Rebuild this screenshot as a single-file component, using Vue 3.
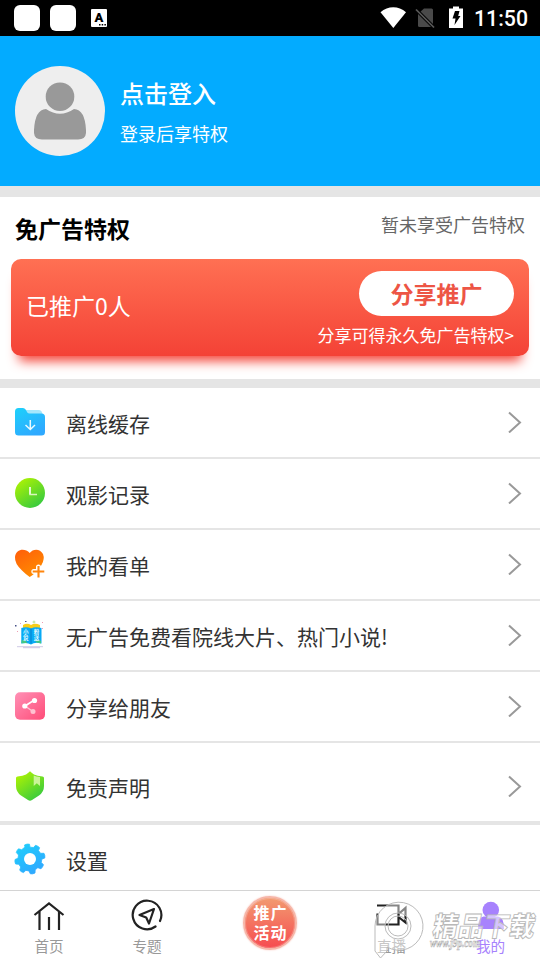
<script setup>
const rows = [
  { icon: 'folder', label: '离线缓存' },
  { icon: 'clock', label: '观影记录' },
  { icon: 'heart', label: '我的看单' },
  { icon: 'book', label: '无广告免费看院线大片、热门小说!' },
  { icon: 'share', label: '分享给朋友' },
  { icon: 'shield', label: '免责声明' },
  { icon: 'gear', label: '设置' },
]
</script>

<template>
  <div class="screen">
    <header class="status">
      <span class="app-square"></span>
      <span class="app-square"></span>
      <svg class="keyboard" viewBox="0 0 16 18" width="16" height="18">
        <rect width="16" height="18" rx="1" fill="#fff" />
        <text x="8" y="12.6" text-anchor="middle" class="key-letter">A</text>
        <path d="M8 15h1.500v1.600H8zM10.700 15h1.500v1.600h-1.500zM13.400 15h1.500v1.600h-1.500z" fill="#000" />
      </svg>
      <svg class="signals" viewBox="0 0 84 24" width="84" height="24">
        <path d="M.5 6.200C8-.4 18.500-.4 26 6.200L13.300 22z" fill="#fff" />
        <path d="M44 2.500h7.500q1.500 0 1.500 1.500v15.500q0 1.500-1.500 1.500h-12q-1.500 0-1.500-1.500V8z" fill="#4a4a4a" />
        <path d="M36.500 4L54.500 22" stroke="#000" stroke-width="3.500" />
        <path d="M36 3.500L54 21.500" stroke="#5a5a5a" stroke-width="1.700" />
        <path d="M73 .5h6v2h4v19.500H69V2.500h4z" fill="#fff" />
        <path d="M75 5h4.500l-1.300 5h2.300L74.500 19l1-6.500h-3z" fill="#000" />
      </svg>
      <span class="time">11:50</span>
    </header>

    <section class="profile">
      <svg class="avatar" viewBox="0 0 90 90" width="90" height="90">
        <circle cx="45" cy="45" r="45" fill="#eee" />
        <circle cx="45" cy="30.700" r="14.300" fill="#999" />
        <path d="M31 43Q20 43.500 19 64V67Q19.500 73.500 27 73.500H63Q70.500 73.500 71 67V64Q70 43.500 59 43Q45 52.500 31 43z" fill="#999" />
      </svg>
      <div>
        <div class="login">点击登入</div>
        <div class="login-note">登录后享特权</div>
      </div>
    </section>

    <section class="privilege">
      <div class="privilege-head">
        <h2>免广告特权</h2>
        <span>暂未享受广告特权</span>
      </div>
      <div class="promo">
        <span class="count">已推广0人</span>
        <div class="promo-side">
          <button>分享推广</button>
          <span class="promo-note">分享可得永久免广告特权&gt;</span>
        </div>
      </div>
    </section>

    <main>
      <div v-for="row in rows" :key="row.icon" class="row" :class="row.icon">
        <svg class="row-icon" viewBox="0 0 30 30" width="30" height="30">
          <defs>
            <linearGradient id="blue" x1="0" y1="0" x2=".6" y2="1"><stop stop-color="#1dd1fb" /><stop offset="1" stop-color="#2fa9ff" /></linearGradient>
            <linearGradient id="green" x1=".1" y1="0" x2=".8" y2="1"><stop stop-color="#b4f500" /><stop offset="1" stop-color="#31c842" /></linearGradient>
            <linearGradient id="orange" x1="0" y1="0" x2=".6" y2="1"><stop stop-color="#ff5d0b" /><stop offset="1" stop-color="#ff8b00" /></linearGradient>
            <linearGradient id="pink" x1="0" y1="0" x2="1" y2="1"><stop stop-color="#ff91b6" /><stop offset="1" stop-color="#ff4c78" /></linearGradient>
          </defs>
          <g v-if="row.icon === 'folder'">
            <path d="M10 3H24Q27.500 3.500 27.500 8H13z" fill="#a5e7fc" />
            <path d="M3.500 1H8Q9.700 1 10.600 2.500L12.500 5.700Q13 6.500 14.500 6.500H26.500Q30 6.500 30 10V25Q30 28.500 26.500 28.500H3.500Q0 28.500 0 25V4.500Q0 1 3.500 1z" fill="url(#blue)" />
            <path d="M15.300 13v9.300M10.500 18l4.800 4.500L20 18" fill="none" stroke="#e9faff" stroke-width="1.500" />
          </g>
          <g v-else-if="row.icon === 'clock'">
            <circle cx="15" cy="15" r="15" fill="url(#green)" />
            <path d="M15 9v7.500" stroke="#fff" stroke-width="1.600" />
            <path d="M14.300 16.500H22" stroke="#d9f7bd" stroke-width="1.500" />
          </g>
          <g v-else-if="row.icon === 'heart'">
            <path d="M14.700 4C10-1.200 1-.3 0 8Q-.5 14.500 7 21.500Q11 25.500 14.700 28Q22 23.500 26.500 16Q30 10 28 5C25-.7 18-.5 14.700 4z" fill="url(#orange)" />
            <path d="M23.500 18v9M18.800 22.500h9" stroke="#fff" stroke-width="5" stroke-linecap="round" />
            <path d="M23.500 17v11.500M17.700 22.500h11.600" stroke="#ff850d" stroke-width="2.100" />
          </g>
          <g v-else-if="row.icon === 'book'">
            <path d="M8 5Q12 2.500 16 5Q20 2.500 25 5V10H8z" fill="#f8cd18" />
            <path d="M6.300 8Q12 6.500 16 8.500Q20 6.500 26.500 8V23.500Q20 21.500 16 24.500Q12 22 6.300 23.500z" fill="#08aaf5" />
            <path d="M16 8.500v15" stroke="#067fc9" />
            <path d="M6.800 20q4-.5 5.500 3l-6 .3zM20 22q3-3 6-1v2.500z" fill="#44c783" />
            <text x="10.800" y="13.500" class="book-text">小</text><text x="21.500" y="13.500" class="book-text">粉</text>
            <text x="10.800" y="20" class="book-text">说</text><text x="21.500" y="20" class="book-text">送</text>
            <path d="M2 26.700h26" stroke="#c3bddd" stroke-width=".8" /><path d="M8 27.700h17" stroke="#b8afd9" stroke-width=".7" />
            <path d="M0 5h1.500v1.500H0z" fill="#465187" /><path d="M10 1h1.500v1H10z" fill="#465187" /><path d="M5 3h1v1H5zM27 2h1v1h-1zM2 11h1v1H2zM27 8h1v1h-1z" fill="#ee9db3" /><circle cx="19" cy="2" r="1" fill="none" stroke="#a8da69" stroke-width=".7" />
          </g>
          <g v-else-if="row.icon === 'share'">
            <rect y="1.200" width="30" height="27.500" rx="5" fill="url(#pink)" />
            <path d="M10 15L18 20.500" stroke="#ffc5d4" stroke-width="1.500" />
            <circle cx="18" cy="20.500" r="2.500" fill="#ffc1d0" />
            <path d="M10 15L19 9.300" stroke="#fff" stroke-width="1.600" />
            <circle cx="9.800" cy="15" r="2.600" fill="#fff" /><circle cx="19.500" cy="9.500" r="2.600" fill="#fff" />
          </g>
          <g v-else-if="row.icon === 'shield'">
            <path d="M15 .3Q17 2 19 3.500Q22 5 27.500 5.500Q29 5.700 29 7V15Q29 21 24 24.500L17 29Q15 30.500 13 29L6 24.500Q1 21 1 15V7Q1 5.700 2.500 5.500Q8 5 11 3.500Q13 2 15 .3z" fill="url(#green)" />
            <path d="M18.700 4.500Q21 5.700 25 6V15L21.800 12.300L18.700 15z" fill="#caf499" />
          </g>
          <g v-else>
            <path d="M10 3L9.500 1Q12-.4 14.500 .2L15 3.200L18.500 3.500L20.500 1.300Q23 1.900 24.600 3.700L23.500 6.600L25.500 9.300L29 9.300Q30.200 11.500 29.800 14L26.800 15.200L26.300 18.500L28.500 20.800Q27.600 23.300 26 24.800L22.800 23.700L20.200 25.800L20 29Q17.800 30.300 15.300 29.800L13.900 26.900L10.800 26.400L8.500 28.600Q6 27.900 4.700 26.200L5.700 23L3.800 20.300L.6 20Q-.4 18 0 15.500L3 14.200L3.500 11L1.300 8.500Q1.900 6.200 3.500 4.800L6.700 5.700z" fill="url(#blue)" stroke="url(#blue)" stroke-width=".8" stroke-linejoin="round" />
            <circle cx="15" cy="15" r="6" fill="#fff" />
          </g>
        </svg>
        <span class="label">{{ row.label }}</span>
        <svg v-if="row.icon !== 'gear'" class="chevron" width="14" height="22" viewBox="0 0 14 22">
          <path d="M1 1.500L12 11.500L1 21.500" fill="none" stroke="#999" stroke-width="2" />
        </svg>
      </div>
    </main>

    <nav>
      <div class="tab">
        <svg width="32" height="32" viewBox="0 0 32 32" class="line-icon">
          <path d="M1.500 16L16 4.500L30.500 16M6.500 12.500V31M16 18V31M26 12.500V31" />
        </svg>
        <span>首页</span>
      </div>
      <div class="tab">
        <svg width="32" height="32" viewBox="0 0 32 32" class="line-icon">
          <path d="M24.500 27.500A14.300 14.300 0 1 1 29 22" stroke-linecap="round" />
          <path d="M23 10L8.500 16L15.200 18.500L18 24.500z" stroke-linejoin="round" />
        </svg>
        <span>专题</span>
      </div>
      <div class="activity"><span>推广</span><span>活动</span></div>
      <div class="tab live">
        <svg width="32" height="32" viewBox="0 0 32 32" class="line-icon">
          <path d="M1 6.500H22.500V25.500H1.500V14.500M22.500 15L29.500 9V23.500L22.500 18" />
        </svg>
        <span>直播</span>
      </div>
      <div class="tab mine">
        <svg width="32" height="32" viewBox="0 0 32 32">
          <path d="M8.500 17.500H23Q29 18 29 30H3Q3 18 8.500 17.500z" fill="#a782fd" />
          <circle cx="15.800" cy="11" r="8.300" fill="#a782fd" />
        </svg>
        <span>我的</span>
      </div>
      <svg class="watermark" width="170" height="60" viewBox="0 0 170 60">
        <g fill="#fff" fill-opacity=".45" stroke="#bbb" stroke-width="1">
          <path fill-rule="evenodd" d="M5 52V27A24 24 0 1 1 17 48V52L10.500 59zM28 14A13 13 0 1 0 28 40A13 13 0 0 0 28 14z" />
          <circle cx="28" cy="27" r="10" fill="none" />
        </g>
        <text x="68" y="37" transform="skewX(-10)" textLength="102" lengthAdjust="spacingAndGlyphs" class="mark-name">精品下载</text>
        <text x="60" y="48" textLength="50" lengthAdjust="spacingAndGlyphs" class="mark-url">www.j9p.com</text>
      </svg>
    </nav>
  </div>
</template>

<style>
body { margin: 0; background: #fff; }
</style>

<style scoped>
.screen { width: 540px; height: 960px; display: flex; flex-direction: column; overflow: hidden; background: #fff; font-family: "Noto Sans CJK SC", sans-serif; color: #333; }
.status { box-sizing: border-box; height: 36px; padding: 0 12px 0 14px; display: flex; align-items: center; background: #000; flex: none; }
.app-square { width: 26px; height: 26px; margin-right: 10px; border-radius: 6px; background: #fff; }
.keyboard { margin-left: 5px; }
.key-letter { font: 900 13px Roboto, sans-serif; }
.signals { margin-left: auto; margin-right: 10px; }
.time { color: #fff; font: 500 21.300px/36px Roboto, sans-serif; padding-top: 2px; }
.profile { box-sizing: border-box; height: 150px; padding: 0 15px; display: flex; align-items: center; gap: 15px; background: #03abff; color: #fff; flex: none; }
.login { font-size: 24px; line-height: 36px; font-weight: 500; }
.login-note { font-size: 18px; line-height: 28px; margin-top: 8px; }
.privilege { box-sizing: border-box; height: 202px; flex: none; border-top: 11px solid #e5e5e5; border-bottom: 9px solid #e5e5e5; padding: 0 11px; }
.privilege-head { height: 62px; padding: 0 4px; display: flex; justify-content: space-between; align-items: center; }
h2 { margin: 0; padding-bottom: 1px; font-size: 23px; line-height: 32px; font-weight: 700; color: #000; }
.privilege-head span { font-size: 18px; line-height: 26px; color: #666; padding-bottom: 9px; }
.promo { box-sizing: border-box; height: 97px; padding: 12px 15px 0; display: flex; justify-content: space-between; border-radius: 10px; color: #fff; background: linear-gradient(#ff7053, #f44236); box-shadow: 0 13px 12px -8px #f44236; }
.count { font-size: 23px; line-height: 34px; padding-top: 17px; }
.promo-side { display: flex; flex-direction: column; align-items: flex-end; }
button { width: 155px; height: 45px; border: 0; border-radius: 23px; padding: 0; background: #fff; color: #ed5545; font: 700 23px/43px "Noto Sans CJK SC", sans-serif; }
.promo-note { font-size: 17px; line-height: 26px; margin-top: 6px; }
main { flex: 1; min-height: 0; }
.row { box-sizing: border-box; height: 71px; padding: 0 18px 1px 15px; display: flex; align-items: center; border-bottom: 2px solid #e5e5e5; }
.row-icon { flex: none; overflow: visible; }
.label { margin-left: 21px; font-size: 21px; line-height: 30px; padding-top: 2px; }
.chevron { margin-left: auto; }
.shield { height: 82px; padding-top: 9px; border-bottom-width: 4px; }
.gear { height: 65px; padding-top: 4px; border: 0; }
.book-text { font: 700 5.500px "Noto Sans CJK SC", sans-serif; fill: #dff9ff; text-anchor: middle; }
nav { position: relative; box-sizing: border-box; height: 70px; border-top: 1px solid #d4d4d4; flex: none; display: flex; background: #fff; }
.tab { width: 98px; display: flex; flex-direction: column; align-items: center; padding-top: 8px; font-size: 14.600px; line-height: 22px; color: #999; }
.tab span { margin-top: 4px; }
.line-icon { fill: none; stroke: #222; stroke-width: 2.200; }
.activity { box-sizing: border-box; width: 54px; height: 54px; margin: 5px 73px 0 47px; padding: 5px 0 0 1px; border-radius: 50%; border: 2px solid #f6b6a8; box-shadow: inset 0 0 0 1px #fff3, 0 0 2px #f9c1b8; background: linear-gradient(#f29a70, #f64c50); color: #fff; font-size: 16px; letter-spacing: 1px; line-height: 19.500px; font-weight: 700; display: flex; flex-direction: column; align-items: center; }
.mine { color: #a782fd; }
.mine, .live { width: 99px; }
.live { margin-left: -28px; }
.watermark { position: absolute; left: 370px; top: 8px; overflow: visible; }
.mark-name { font: 900 27px "Noto Sans CJK SC", sans-serif; fill: #fff; fill-opacity: .55; stroke: #b8b8b8; stroke-width: .9; }
.mark-url { font: italic 700 12px "Liberation Serif", serif; fill: #fff; fill-opacity: .7; stroke: #aaa; stroke-width: .6; }
</style>
